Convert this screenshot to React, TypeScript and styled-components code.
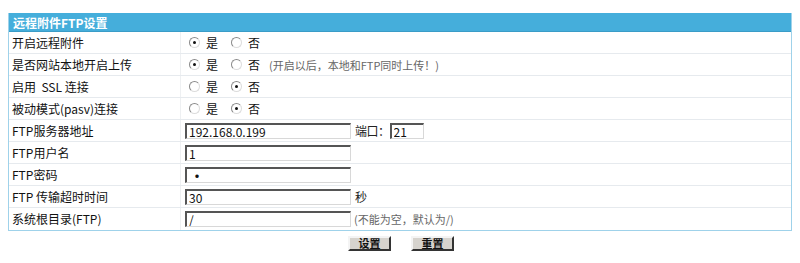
import React from 'react';
import styled, { createGlobalStyle } from 'styled-components';

const GlobalStyle = createGlobalStyle`
  body {
    margin: 0;
    background: #ffffff;
    font-family: "Noto Sans CJK SC", "Liberation Sans", sans-serif;
    font-size: 12px;
    color: #111;
  }
`;

const Page = styled.div`
  padding: 13px 8px 0 8px;
`;

const Table = styled.div`
  border: 1px solid #9fd2ea;
  border-top: none;
`;

const Header = styled.div`
  height: 18px;
  background: #45aedb;
  color: #ffffff;
  font-weight: bold;
  display: flex;
  align-items: center;
  padding-left: 4px;
  border-bottom: 1px solid #3a9cc7;
`;

const Row = styled.div`
  display: grid;
  grid-template-columns: 172px 1fr;
  height: 21px;
  line-height: 14px;
  border-bottom: 1px solid #e6eaee;
  &:last-child {
    border-bottom: none;
    height: 22px;
  }
`;

const Label = styled.div`
  display: flex;
  align-items: center;
  padding-left: 3px;
  border-right: 1px solid #eef0f2;
`;

const Value = styled.div`
  display: flex;
  align-items: center;
  padding-left: 4px;
  gap: 3px;
`;

const Radio = styled.span<{ $on?: boolean }>`
  width: 9px;
  height: 9px;
  border-radius: 50%;
  border: 1px solid #8a8a8a;
  border-right-color: #dcdcdc;
  border-bottom-color: #dcdcdc;
  background: #fff;
  display: inline-flex;
  align-items: center;
  justify-content: center;
  margin-left: 4px;
  &::after {
    content: '';
    width: 3px;
    height: 3px;
    border-radius: 50%;
    background: ${({ $on }) => ($on ? '#111' : 'transparent')};
  }
`;

const Choice = styled.span`
  margin: 0 6px 0 3px;
`;

const Hint = styled.span`
  color: #666;
  font-size: 11px;
`;

const Input = styled.input<{ $w: number; $dot?: boolean }>`
  width: ${({ $w }) => $w}px;
  height: 16px;
  box-sizing: border-box;
  border: 1px solid;
  border-color: #555 #d8d8d8 #d8d8d8 #555;
  border-top-width: 2px;
  border-left-width: 2px;
  padding: 0 2px;
  font-family: "Noto Sans CJK SC", "Liberation Sans", sans-serif;
  font-size: ${({ $dot }) => ($dot ? '16px' : '12px')};
  line-height: 12px;
  color: #111;
  background: #fff;
  outline: none;
`;

const Inline = styled.span`
  margin: 0 -3px 0 1px;
  letter-spacing: -0.5px;
  color: #222;
`;

const Buttons = styled.div`
  display: flex;
  justify-content: center;
  gap: 20px;
  padding-top: 5px;
  padding-left: 2px;
`;

const Button = styled.button`
  width: 43px;
  height: 15px;
  padding: 0;
  background: #d6d3ce;
  border: 2px solid;
  border-color: #f4f4f4 #333 #333 #f4f4f4;
  font-family: "Noto Sans CJK SC", "Liberation Sans", sans-serif;
  font-size: 11px;
  font-weight: bold;
  line-height: 11px;
  color: #111;
`;

type YesNoProps = { yes: boolean; hint?: string };

const YesNo: React.FC<YesNoProps> = ({ yes, hint }) => (
  <Value>
    <Radio $on={yes} />
    <Choice>是</Choice>
    <Radio $on={!yes} />
    <Choice>否</Choice>
    {hint && <Hint>{hint}</Hint>}
  </Value>
);

export default function App() {
  return (
    <Page>
      <GlobalStyle />
      <Table>
        <Header>远程附件FTP设置</Header>
        <Row>
          <Label>开启远程附件</Label>
          <YesNo yes />
        </Row>
        <Row>
          <Label>是否网站本地开启上传</Label>
          <YesNo yes hint="(开启以后，本地和FTP同时上传！)" />
        </Row>
        <Row>
          <Label>启用&nbsp; SSL 连接</Label>
          <YesNo yes={false} />
        </Row>
        <Row>
          <Label>被动模式(pasv)连接</Label>
          <YesNo yes={false} />
        </Row>
        <Row>
          <Label>FTP服务器地址</Label>
          <Value>
            <Input $w={166} defaultValue="192.168.0.199" />
            <Inline>端口：</Inline>
            <Input $w={34} defaultValue="21" />
          </Value>
        </Row>
        <Row>
          <Label>FTP用户名</Label>
          <Value>
            <Input $w={166} defaultValue="1" />
          </Value>
        </Row>
        <Row>
          <Label>FTP密码</Label>
          <Value>
            <Input $w={166} $dot defaultValue="•" />
          </Value>
        </Row>
        <Row>
          <Label>FTP 传输超时时间</Label>
          <Value>
            <Input $w={166} defaultValue="30" />
            <Inline>秒</Inline>
          </Value>
        </Row>
        <Row>
          <Label>系统根目录(FTP)</Label>
          <Value>
            <Input $w={166} defaultValue="/" />
            <Hint>(不能为空，默认为/)</Hint>
          </Value>
        </Row>
      </Table>
      <Buttons>
        <Button>设置</Button>
        <Button>重置</Button>
      </Buttons>
    </Page>
  );
}
